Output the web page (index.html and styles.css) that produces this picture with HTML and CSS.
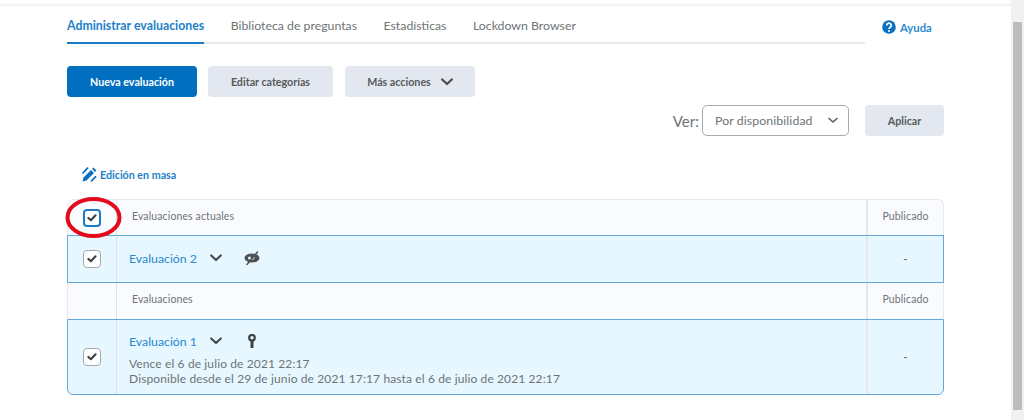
FILE: index.html
```html
<!DOCTYPE html>
<html lang="es">
<head>
<meta charset="utf-8">
<title>Administrar evaluaciones</title>
<link rel="stylesheet" href="styles.css">
</head>
<body>
<div class="window">
  <main class="page">
    <div class="topstrip"></div>
    <div class="content">
      <div class="tabrow">
        <nav class="tabs">
          <a class="tab active">Administrar evaluaciones</a>
          <a class="tab">Biblioteca de preguntas</a>
          <a class="tab">Estadísticas</a>
          <a class="tab">Lockdown Browser</a>
        </nav>
        <a class="help">
          <svg width="14" height="14" viewBox="0 0 14 14"><circle cx="7" cy="7" r="6.800" fill="#0a70bf"/><path d="M4.700 5.400a2.300 2.200 0 1 1 3.600 1.800c-.8.500-1.300.9-1.300 1.700" fill="none" stroke="#fff" stroke-width="1.700"/><circle cx="7" cy="11" r="1" fill="#fff"/></svg>
          Ayuda
        </a>
      </div>
      <div class="actions">
        <button class="btn primary w130"><span>Nueva evaluación</span></button>
        <button class="btn w125"><span>Editar categorías</span></button>
        <button class="btn w130"><span>Más acciones</span>
          <svg class="chev" width="12" height="8" viewBox="0 0 12 8"><path d="M1.200 1.500 6 6l4.800-4.500" fill="none" stroke="#494c4e" stroke-width="2.200" stroke-linecap="round" stroke-linejoin="round"/></svg>
        </button>
      </div>
      <div class="filter">
        <span class="ver">Ver:</span>
        <div class="select">Por disponibilidad
          <svg width="10" height="7" viewBox="0 0 10 7"><path d="M1 1.500 5 5l4-3.500" fill="none" stroke="#565a5c" stroke-width="1.600" stroke-linecap="round" stroke-linejoin="round"/></svg>
        </div>
        <button class="btn apply"><span>Aplicar</span></button>
      </div>
      <a class="bulk">
        <svg width="15" height="15" viewBox="0 0 15 15"><path d="M0.500 14.500 1.500 10.500 9 3l3 3-7.500 7.500zM10 2l1.500-1.500 3 3L13 5z" fill="#0a70bf"/><path d="M1 6 5.500 1.200M9.500 13.800l4-4" stroke="#0a70bf" stroke-width="1.800" stroke-linecap="round"/></svg>
        Edición en masa
      </a>
      <div class="grid">
        <div class="row head first">
          <div class="c-check"><span class="check focus"><svg width="10" height="8" viewBox="0 0 11 9"><path d="M1.500 4.500 4.200 7 9.500 1.500" fill="none" stroke="#3f4244" stroke-width="2.400" stroke-linecap="round" stroke-linejoin="round"/></svg></span></div>
          <div class="c-main">Evaluaciones actuales</div>
          <div class="c-pub">Publicado</div>
        </div>
        <div class="row sel r2">
          <div class="c-check"><span class="check"><svg width="10" height="8" viewBox="0 0 11 9"><path d="M1.500 4.500 4.200 7 9.500 1.500" fill="none" stroke="#3f4244" stroke-width="2.400" stroke-linecap="round" stroke-linejoin="round"/></svg></span></div>
          <div class="c-main">
            <div class="title">
              <a class="name">Evaluación 2</a>
              <svg class="chev-t" width="12" height="8" viewBox="0 0 12 8"><path d="M1.200 1.500 6 6l4.800-4.500" fill="none" stroke="#494c4e" stroke-width="2.200" stroke-linecap="round" stroke-linejoin="round"/></svg>
              <svg class="state" width="16" height="14" viewBox="0 0 16 14"><ellipse cx="8" cy="7" rx="7.500" ry="4.500" fill="#4f5254"/><circle cx="5.500" cy="7" r="1.500" fill="#e6f7ff"/><path d="M3 13.500 13.500 1" stroke="#4f5254" stroke-width="1.600" stroke-linecap="round"/><path d="M10.500 6.500 8.500 9" stroke="#e6f7ff" stroke-width="1"/></svg>
            </div>
          </div>
          <div class="c-pub dash">-</div>
        </div>
        <div class="row head second">
          <div class="c-check"></div>
          <div class="c-main">Evaluaciones</div>
          <div class="c-pub">Publicado</div>
        </div>
        <div class="row sel r4 last">
          <div class="c-check"><span class="check"><svg width="10" height="8" viewBox="0 0 11 9"><path d="M1.500 4.500 4.200 7 9.500 1.500" fill="none" stroke="#3f4244" stroke-width="2.400" stroke-linecap="round" stroke-linejoin="round"/></svg></span></div>
          <div class="c-main">
            <div class="title">
              <a class="name">Evaluación 1</a>
              <svg class="chev-t" width="12" height="8" viewBox="0 0 12 8"><path d="M1.200 1.500 6 6l4.800-4.500" fill="none" stroke="#494c4e" stroke-width="2.200" stroke-linecap="round" stroke-linejoin="round"/></svg>
              <svg class="state" width="16" height="14" viewBox="0 0 16 14"><circle cx="8" cy="3.800" r="2.800" fill="none" stroke="#3f4244" stroke-width="2.200"/><path d="M8 6.500V14" stroke="#3f4244" stroke-width="3"/></svg>
            </div>
            <div class="meta">Vence el 6 de julio de 2021 22:17<br>Disponible desde el 29 de junio de 2021 17:17 hasta el 6 de julio de 2021 22:17</div>
          </div>
          <div class="c-pub dash">-</div>
        </div>
        <svg class="circle" width="59" height="45" viewBox="0 0 59 45"><ellipse cx="29.500" cy="22.500" rx="26" ry="18.500" fill="none" stroke="#e30a1c" stroke-width="4"/></svg>
      </div>
    </div>
  </main>
  <aside class="scrollbar"><div class="thumb"></div></aside>
</div>
</body>
</html>
```
FILE: styles.css
```css
* { box-sizing: border-box; }
html, body { margin: 0; height: 100%; overflow: hidden; background: #fff; }
body { font-family: Lato, "Open Sans", sans-serif; color: #6e7376; }
button { font-family: inherit; }

.window { display: flex; height: 420px; }
.page { flex: 1; min-width: 0; }
.topstrip { height: 6px; background: linear-gradient(#fff 0, #fff 3px, #f1f2f3 4px, #f3f4f5 6px); }
.content { padding: 0 67px; }

.tabrow { display: flex; height: 38px; }
.tabs { width: 798px; display: flex; gap: 26.500px; border-bottom: 2px solid #e6e8ec; height: 38px; }
.tab { display: block; height: 38px; padding-top: 11px; font-size: 12.300px; line-height: 17px; color: #6e7376; white-space: nowrap; }
.tab.active { color: #1c7fc9; font-weight: 700; border-bottom: 2px solid #1a7cc6; }
.help { display: flex; align-items: center; gap: 4px; margin-left: 17px; height: 14px; margin-top: 14px; font-size: 11.300px; font-weight: 700; color: #2a8ad2; }

.actions { display: flex; gap: 11px; margin-top: 22px; }
.btn { height: 31px; border: 0; border-radius: 4px; background: #e3e8f0; color: #565a5c; font-size: 10.700px; font-weight: 700; display: flex; align-items: center; justify-content: center; padding: 0 0 1px; }
.btn.primary { background: #006fbf; color: #fff; }
.w130 { width: 130px; }
.w125 { width: 125px; margin-right: 1px; }
.chev { margin-left: 10px; margin-top: 1px; }

.filter { display: flex; align-items: center; justify-content: flex-end; margin-top: 8px; height: 31px; }
.ver { font-size: 15px; color: #6e7376; margin-right: 3px; }
.select { width: 147px; height: 31px; border: 1px solid #a9acae; border-radius: 5px; background: #fff; padding: 0 10px 0 12px; display: flex; align-items: center; justify-content: space-between; font-size: 12.300px; letter-spacing: .1px; color: #6e7376; }
.apply { width: 79px; margin-left: 16px; }

.bulk { display: flex; align-items: center; gap: 3px; margin: 31px 0 0 15px; height: 14px; font-size: 10.700px; font-weight: 700; color: #1c7fc9; }

.grid { position: relative; margin-top: 18px; width: 877px; display: flex; flex-direction: column; }
.row { display: grid; grid-template-columns: 49px 1fr 77px; }
.row > div { display: flex; align-items: center; }
.head { background: #fafbfe; border: 1px solid #e6e8ec; border-top: 0; border-bottom: 0; height: 36px; font-size: 10.500px; letter-spacing: .12px; color: #6e7376; }
.head .c-main, .head .c-pub { padding-bottom: 3px; }
.second .c-main, .second .c-pub { padding-bottom: 5px; }
.head.first { border-top: 1px solid #e6e8ec; border-radius: 6px 6px 0 0; }
.sel { background: #e6f7ff; border: 1px solid #63a8dd; }
.r2 { height: 48px; }
.r4 { height: 76px; }
.last { border-radius: 0 0 6px 6px; }
.c-check { justify-content: center; border-right: 1px solid #d9e5ee; padding-right: 1px; }
.c-main { padding-left: 15px; }
.sel .c-main { padding-left: 12px; flex-direction: column; align-items: flex-start; justify-content: center; }
.r2 .c-main { padding-bottom: 2px; }
.r4 .c-main { justify-content: flex-start; padding-top: 12px; }
.c-pub { justify-content: center; border-left: 2px solid #e6e8ec; }
.dash { font-size: 13px; }

.check { width: 18px; height: 18px; border: 1px solid #a4a8aa; border-radius: 4px; background: #fff; display: flex; align-items: center; justify-content: center; }
.check.focus { border: 2px solid #1a7cc6; }

.title { display: flex; align-items: center; height: 18px; }
.name { font-size: 12.300px; color: #2a88cf; width: 81px; white-space: nowrap; }
.state { margin-left: 22px; }
.meta { font-size: 12px; line-height: 14.500px; letter-spacing: .12px; color: #6e7376; margin-top: 7px; }

.circle { position: absolute; left: -3px; top: -4px; }

.scrollbar { width: 13px; background: #f1f1f1; padding: 22px 2px 10px 2px; }
.thumb { height: 100%; background: #bcbebd; }
```
